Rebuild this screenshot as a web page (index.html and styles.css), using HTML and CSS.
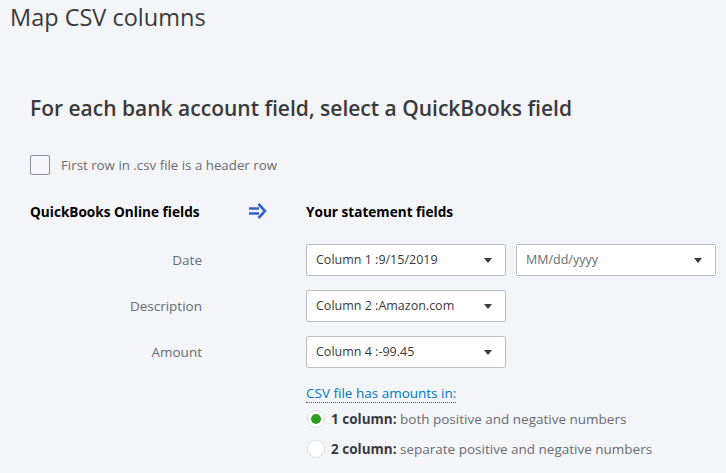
FILE: index.html
```html
<!DOCTYPE html>
<html lang="en">
<head>
<meta charset="UTF-8" />
<title>Map CSV columns</title>
<link rel="stylesheet" href="styles.css">
</head>
<body>

<h1 class="page-title">Map CSV columns</h1>

<section class="mapper">
  <h2>For each bank account field, select a QuickBooks field</h2>

  <label class="check-row">
    <span class="checkbox"></span>
    First row in .csv file is a header row
  </label>

  <div class="map-head">
    <span class="col-label">QuickBooks Online fields</span>
    <span class="arrow">
      <svg width="20" height="18" viewBox="0 0 20 18">
        <path d="M1 6.5h10M1 11.5h10M10.5 2l6.5 7-6.5 7" fill="none" stroke="#3463c9" stroke-width="2.6" stroke-linejoin="miter"/>
      </svg>
    </span>
    <span class="col-field">Your statement fields</span>
  </div>

  <div class="map-row">
    <span class="col-label">Date</span>
    <div class="col-field">
      <div class="dropdown">Column 1 :9/15/2019<i class="caret"></i></div>
      <div class="dropdown muted">MM/dd/yyyy<i class="caret"></i></div>
    </div>
  </div>

  <div class="map-row">
    <span class="col-label">Description</span>
    <div class="col-field">
      <div class="dropdown">Column 2 :Amazon.com<i class="caret"></i></div>
    </div>
  </div>

  <div class="map-row">
    <span class="col-label">Amount</span>
    <div class="col-field">
      <div class="dropdown">Column 4 :-99.45<i class="caret"></i></div>
    </div>
  </div>

  <div class="amounts">
    <a class="hint" href="#">CSV file has amounts in:</a>
    <label class="radio-row"><span class="radio on"></span><b>1 column:</b>&nbsp;both positive and negative numbers</label>
    <label class="radio-row"><span class="radio"></span><b>2 column:</b>&nbsp;separate positive and negative numbers</label>
  </div>
</section>

</body>
</html>
```

FILE: styles.css
```css
* {
  box-sizing: border-box;
}
body {
  margin: 0;
  background: #f4f5f8;
  font-family: 'Open Sans', 'Lato', sans-serif;
  color: #393a3d;
  overflow: hidden;
}
.page-title {
  margin: 0;
  padding: 2px 0 0 10px;
  font-size: 23.5px;
  font-weight: 400;
  line-height: 30px;
}
.mapper {
  padding: 61px 0 0 30px;
}
h2 {
  margin: 0;
  font-size: 21px;
  font-weight: 600;
  line-height: 30px;
}
.check-row {
  display: flex;
  align-items: center;
  gap: 11px;
  margin-top: 32px;
  font-size: 13.3px;
  color: #6b6c72;
}
.checkbox {
  width: 20px;
  height: 20px;
  border: 1px solid #8d9096;
  border-radius: 2px;
  background: #f4f5f8;
}
.map-head, .map-row {
  display: flex;
  align-items: center;
}
.map-head {
  margin-top: 26px;
  font-size: 13.6px;
  font-weight: 700;
  color: #000;
  height: 20px;
}
.map-head .col-label {
  width: 218px;
}
.arrow {
  width: 58px;
  display: flex;
}
.map-row {
  margin-top: 14px;
}
.map-head + .map-row {
  margin-top: 23px;
}
.map-row .col-label {
  width: 172px;
  text-align: right;
  font-size: 13.5px;
  color: #6b6c72;
}
.map-row .col-field {
  margin-left: 104px;
  display: flex;
  gap: 10px;
}
.dropdown {
  position: relative;
  width: 200px;
  height: 32px;
  border: 1px solid #babec5;
  border-radius: 2px;
  background: #fff;
  padding: 0 0 0 9px;
  font-size: 12.5px;
  line-height: 30px;
  color: #393a3d;
}
.dropdown.muted {
  color: #6b6c72;
}
.caret {
  position: absolute;
  right: 13px;
  top: 13px;
  border-left: 4px solid transparent;
  border-right: 4px solid transparent;
  border-top: 5px solid #393a3d;
}
.amounts {
  margin: 16px 0 0 276px;
  display: flex;
  flex-direction: column;
}
.hint {
  align-self: flex-start;
  color: #0077c5;
  font-size: 13.5px;
  text-decoration: none;
  border-bottom: 1px dotted #0077c5;
  line-height: 18px;
}
.radio-row {
  display: flex;
  align-items: center;
  font-size: 13.5px;
  color: #6b6c72;
  height: 18px;
  margin-top: 7px;
}
.radio-row + .radio-row {
  margin-top: 12px;
}
.radio-row b {
  color: #393a3d;
  margin-left: 6px;
}
.radio {
  width: 18px;
  height: 18px;
  border-radius: 50%;
  border: 1px solid #dcdde0;
  background: #fff;
  margin-left: 1px;
  position: relative;
}
.radio.on::after {
  content: "";
  position: absolute;
  left: 3px;
  top: 3px;
  width: 10px;
  height: 10px;
  border-radius: 50%;
  background: #2ca01c;
}
```
